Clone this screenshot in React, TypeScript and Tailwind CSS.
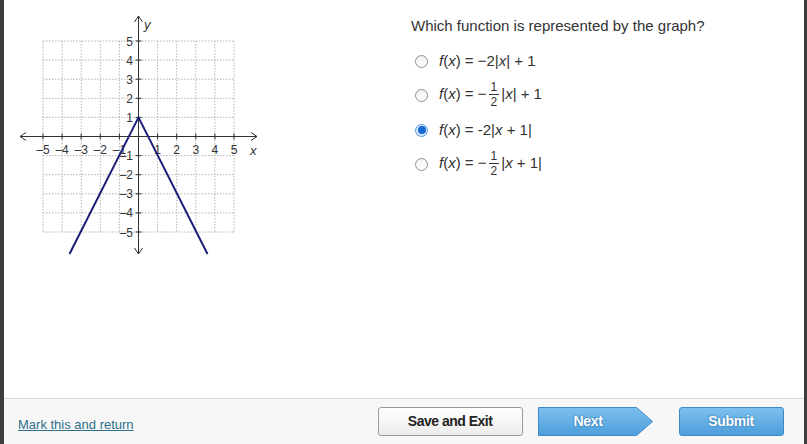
import React from 'react'

const ox = 138.5
const oy = 136.5
const u = 19.1
const steps = [-5, -4, -3, -2, -1, 0, 1, 2, 3, 4, 5]

const Graph = () => {
  return (
    <svg width={270} height={260} viewBox="4 0 270 260" className="block">
      {/* grid */}
      {steps.map((i) => (
        <g key={'g' + i} stroke="#b4b4b4" strokeWidth={1} strokeDasharray="1.5 1.5">
          <line x1={ox + i * u} y1={oy - 5 * u} x2={ox + i * u} y2={oy + 5 * u} />
          <line x1={ox - 5 * u} y1={oy + i * u} x2={ox + 5 * u} y2={oy + i * u} />
        </g>
      ))}
      {/* axes */}
      <g stroke="#333" strokeWidth={1} fill="none">
        <line x1={20} y1={oy} x2={257} y2={oy} />
        <line x1={ox} y1={16} x2={ox} y2={254} />
        <polyline points={`26,${oy - 4} 20,${oy} 26,${oy + 4}`} />
        <polyline points={`251,${oy - 4} 257,${oy} 251,${oy + 4}`} />
        <polyline points={`${ox - 4},22 ${ox},16 ${ox + 4},22`} />
        <polyline points={`${ox - 4},248 ${ox},254 ${ox + 4},248`} />
        {steps.filter((i) => i !== 0).map((i) => (
          <g key={'t' + i}>
            <line x1={ox + i * u} y1={oy - 3} x2={ox + i * u} y2={oy + 3} />
            <line x1={ox - 3} y1={oy + i * u} x2={ox + 3} y2={oy + i * u} />
          </g>
        ))}
      </g>
      {/* labels */}
      <g fill="#333" fontSize={12} fontFamily="'Liberation Sans', Arial, sans-serif">
        {steps.filter((i) => i !== 0).map((i) => (
          <g key={'l' + i}>
            <text x={ox + i * u} y={154} textAnchor="middle">
              {i < 0 ? '\u2013' + -i : i}
            </text>
            <text x={133} y={oy - i * u + 4.5} textAnchor="end">
              {i < 0 ? '\u2013' + -i : i}
            </text>
          </g>
        ))}
        <text x={250} y={155} fontStyle="italic" fontSize={13}>x</text>
        <text x={144} y={29} fontStyle="italic" fontSize={13}>y</text>
      </g>
      {/* function */}
      <polyline
        points={`69.5,254 ${ox},${oy - u} 207.5,254`}
        fill="none"
        stroke="#1d1d7a"
        strokeWidth={2}
      />
    </svg>
  )
}

const Frac = () => (
  <span className="inline-flex flex-col items-center align-middle text-[12px] leading-[11px] mx-[2px] -mt-[1px]">
    <span className="border-b border-[#333] px-[2px] pb-[1px]">1</span>
    <span className="pt-[2px]">2</span>
  </span>
)

const Radio = ({ checked }: { checked?: boolean }) =>
  checked ? (
    <span className="w-[13px] h-[13px] rounded-full border border-[#5c9be0] bg-[#d4e6f9] flex items-center justify-center shrink-0">
      <span className="w-[8px] h-[8px] rounded-full bg-[#1769d6]" />
    </span>
  ) : (
    <span className="w-[13px] h-[13px] rounded-full border border-[#8f8f8f] bg-gradient-to-b from-[#f2f2f2] to-white shrink-0" />
  )

const I = ({ children }: { children: React.ReactNode }) => <i>{children}</i>

const options = [
  <>
    <I>f</I>(<I>x</I>) = −2|<I>x</I>| + 1
  </>,
  <>
    <I>f</I>(<I>x</I>) = −<Frac />|<I>x</I>| + 1
  </>,
  <>
    <I>f</I>(<I>x</I>) = -2|<I>x</I> + 1|
  </>,
  <>
    <I>f</I>(<I>x</I>) = −<Frac />|<I>x</I> + 1|
  </>,
]

export default function App() {
  return (
    <div className="w-[807px] h-[444px] flex flex-col bg-white border-l-4 border-r-[3px] border-[#3d3d3d] font-['Liberation_Sans',Arial,sans-serif] text-[#333] overflow-hidden">
      <div className="h-[398px] flex">
        <div className="w-[270px] shrink-0">
          <Graph />
        </div>

        {/* question */}
        <div className="ml-[137px] pt-[17px]">
          <p className="text-[15px] leading-[18px]">Which function is represented by the graph?</p>
          <div className="mt-[9px] flex flex-col">
            {options.map((opt, idx) => (
              <div key={idx} className={`flex items-center ${idx === 1 ? 'h-[35px]' : 'h-[34px]'}`}>
                <div className="ml-[4px] mr-[11px] flex items-center">
                  <Radio checked={idx === 2} />
                </div>
                <span className="text-[15px] leading-[18px] whitespace-nowrap">{opt}</span>
              </div>
            ))}
          </div>
        </div>
      </div>

      {/* footer */}
      <div className="flex-1 border-t border-[#d8d8d8] bg-[#f7f7f7] flex items-center pl-[14px]">
        <a href="#" className="mt-[6px] text-[13px] text-[#2f6f8a] underline">
          Mark this and return
        </a>
        <button className="ml-[244px] w-[145px] h-[29px] rounded-[3px] border border-[#9a9a9a] bg-gradient-to-b from-white to-[#ececec] text-[14px] font-bold tracking-[-0.5px] text-[#222]">
          Save and Exit
        </button>
        <button className="ml-[15px] relative w-[115px] h-[29px] text-[14px] font-bold tracking-[-0.3px] text-white [text-shadow:0_0_2px_#1f5f99]">
          <svg width={115} height={29} className="absolute inset-0">
            <defs>
              <linearGradient id="nb" x1="0" y1="0" x2="0" y2="1">
                <stop offset="0" stopColor="#7cc0ee" />
                <stop offset="1" stopColor="#4d9edb" />
              </linearGradient>
            </defs>
            <polygon points="0.5,0.5 98.5,0.5 114.5,14.5 98.5,28.5 0.5,28.5" fill="url(#nb)" stroke="#3f88c8" />
          </svg>
          <span className="relative pr-[14px]">Next</span>
        </button>
        <button className="ml-[26px] w-[105px] h-[29px] rounded-[3px] border border-[#3f88c8] bg-gradient-to-b from-[#7cc0ee] to-[#4d9edb] text-[14px] font-bold tracking-[-0.3px] text-white [text-shadow:0_0_2px_#1f5f99]">
          Submit
        </button>
      </div>
    </div>
  )
}
